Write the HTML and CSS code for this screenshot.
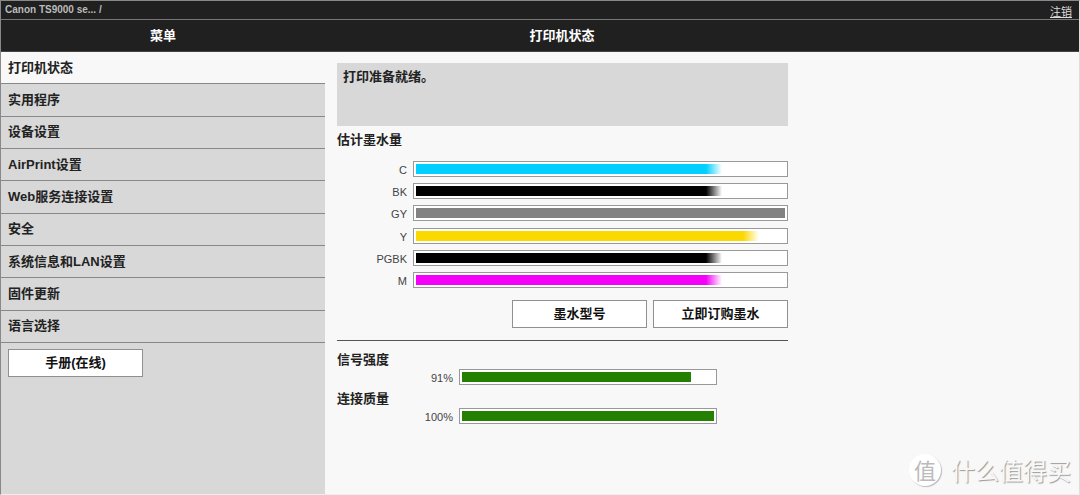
FILE: index.html
```html
<!DOCTYPE html>
<html lang="zh-CN">
<head>
<meta charset="utf-8">
<meta name="viewport" content="width=device-width, initial-scale=1">
<title>Canon TS9000 series</title>
<link rel="stylesheet" href="styles.css">
</head>
<body>
<div class="app">
  <header class="header">
    <div class="topbar">
      <span class="crumb">Canon TS9000 se... /</span>
      <a class="logout" href="#logout">注销</a>
    </div>
    <div class="titles">
      <div class="menu-title">菜单</div>
      <h1 class="page-title">打印机状态</h1>
    </div>
  </header>

  <div class="columns">
    <nav class="sidebar" aria-label="菜单">
      <ul class="menu">
        <li class="menu-item current"><a href="#status" aria-current="page">打印机状态</a></li>
        <li class="menu-item"><a href="#utilities">实用程序</a></li>
        <li class="menu-item"><a href="#device">设备设置</a></li>
        <li class="menu-item"><a href="#airprint">AirPrint设置</a></li>
        <li class="menu-item"><a href="#web">Web服务连接设置</a></li>
        <li class="menu-item"><a href="#security">安全</a></li>
        <li class="menu-item"><a href="#lan">系统信息和LAN设置</a></li>
        <li class="menu-item"><a href="#firmware">固件更新</a></li>
        <li class="menu-item"><a href="#language">语言选择</a></li>
      </ul>
      <button class="button manual" type="button">手册(在线)</button>
    </nav>

    <main class="content">
      <div class="status">打印准备就绪。</div>

      <h2 class="heading">估计墨水量</h2>
      <div class="inks">
        <div class="ink"><span class="label">C</span><div class="bar"><div class="fill fade cyan" style="width:83%"></div></div></div>
        <div class="ink"><span class="label">BK</span><div class="bar"><div class="fill fade black" style="width:83%"></div></div></div>
        <div class="ink"><span class="label">GY</span><div class="bar"><div class="fill gray" style="width:100%"></div></div></div>
        <div class="ink"><span class="label">Y</span><div class="bar"><div class="fill fade yellow" style="width:93%"></div></div></div>
        <div class="ink"><span class="label">PGBK</span><div class="bar"><div class="fill fade black" style="width:83%"></div></div></div>
        <div class="ink"><span class="label">M</span><div class="bar"><div class="fill fade magenta" style="width:83%"></div></div></div>
      </div>
      <div class="actions">
        <button class="button" type="button">墨水型号</button>
        <button class="button" type="button">立即订购墨水</button>
      </div>

      <hr class="rule">

      <section class="signal">
        <h2 class="heading">信号强度</h2>
        <div class="signal-row"><span class="label">91%</span><div class="bar"><div class="fill green" style="width:91%"></div></div></div>
      </section>
      <section class="signal">
        <h2 class="heading">连接质量</h2>
        <div class="signal-row"><span class="label">100%</span><div class="bar"><div class="fill green" style="width:100%"></div></div></div>
      </section>
    </main>
  </div>
</div>
<div class="watermark"><span class="seal">值</span><span class="brand">什么值得买</span></div>
</body>
</html>
```
FILE: styles.css
```css
* {
  box-sizing: border-box;
}

body {
  margin: 0;
  background: #f8f8f8;
  color: #222;
  font: 13px/20px "Liberation Sans", "Noto Sans CJK SC", sans-serif;
}

.app {
  display: flex;
  flex-direction: column;
  min-height: 100vh;
  border: solid #888;
  border-width: 1px 0 0 1px;
  border-right: 1px solid #ddd;
  border-bottom: 1px solid #eee;
}

.header {
  background: #202020;
  color: #fff;
  border-bottom: 1px solid #444;
}

.topbar {
  display: flex;
  justify-content: space-between;
  height: 19px;
  padding: 0 7px 0 4px;
  border-bottom: 1px solid #777;
  font-size: 10px;
  line-height: 18px;
}

.crumb {
  color: #bbb;
  font-weight: bold;
}

.logout {
  color: #ddd;
  font-size: 11px;
  line-height: 22px;
}

.titles,
.columns {
  display: grid;
  grid-template-columns: 324px minmax(0, 1fr);
}

.titles {
  font-size: 13px;
  font-weight: bold;
  line-height: 31px;
  text-align: center;
}

.page-title {
  max-width: 474px;
  margin: 0;
  font-size: 13px;
}

.columns {
  flex: 1;
}

.sidebar {
  background: #d8d8d8;
}

.menu {
  display: grid;
  grid-auto-rows: 1fr;
  min-height: 291px;
  margin: 0;
  padding: 0;
  list-style: none;
}

.menu-item {
  display: grid;
  align-items: center;
  border-bottom: 1px solid #888;
}

.menu-item a {
  padding: 0 7px;
  color: #222;
  font-weight: bold;
  text-decoration: none;
}

.current {
  background: #f8f8f8;
}

.button {
  width: 135px;
  height: 28px;
  padding: 0;
  border: 1px solid #909090;
  border-radius: 0;
  background: #fff;
  color: #111;
  font: inherit;
  font-weight: bold;
}

.manual {
  margin: 6px 7px;
}

.content {
  width: 100%;
  max-width: 475px;
  padding: 11px 12px 20px;
}

.status {
  min-height: 63px;
  padding: 4px 6px;
  background: #d8d8d8;
  font-weight: bold;
}

.heading {
  margin: 0;
  font-size: 13px;
  line-height: 20px;
}

.status + .heading {
  margin: 4px 0 11px;
}

.inks {
  display: grid;
  align-content: space-between;
  min-height: 127px;
}

.ink,
.signal-row {
  display: grid;
  grid-template-columns: 70px minmax(0, 1fr);
  gap: 6px;
}

.signal-row {
  grid-template-columns: 116px minmax(0, 258px);
}

.label {
  color: #444;
  font-size: 11px;
  line-height: 18px;
  text-align: right;
}

.bar {
  height: 16px;
  padding: 2px;
  border: 1px solid #999;
  background: #fff;
}

.ink,
.signal-row {
  height: 16px;
}

.fill {
  height: 10px;
  background: var(--ink);
}

.fade {
  background: linear-gradient(to right, var(--ink) calc(100% - 16px), #fff);
}

.cyan { --ink: #00cfff; }
.black { --ink: #000; }
.gray { --ink: #828282; }
.yellow { --ink: #fbd800; }
.magenta { --ink: #f400f8; }
.green { --ink: #238000; }

.actions {
  display: flex;
  justify-content: flex-end;
  gap: 6px;
  margin-top: 12px;
}

.rule {
  margin: 12px 0 10px;
  border: 0;
  border-top: 1px solid #555;
}

.signal {
  margin-bottom: 5px;
}

.signal .heading {
  line-height: 18px;
}

.watermark {
  position: absolute;
  right: 9px;
  bottom: 9px;
  display: flex;
  align-items: center;
  gap: 10px;
  color: #f8f8f8;
  font-family: "Noto Sans CJK SC", sans-serif;
  font-size: 24px;
  line-height: 32px;
  text-shadow: 1px 1px 1px #999;
}

.seal {
  width: 32px;
  height: 32px;
  border-radius: 50%;
  background: #fff;
  box-shadow: 1px 1px 1px #bbb;
  color: #bbb;
  font-size: 22px;
  line-height: 31px;
  text-align: center;
  text-shadow: none;
}
```
